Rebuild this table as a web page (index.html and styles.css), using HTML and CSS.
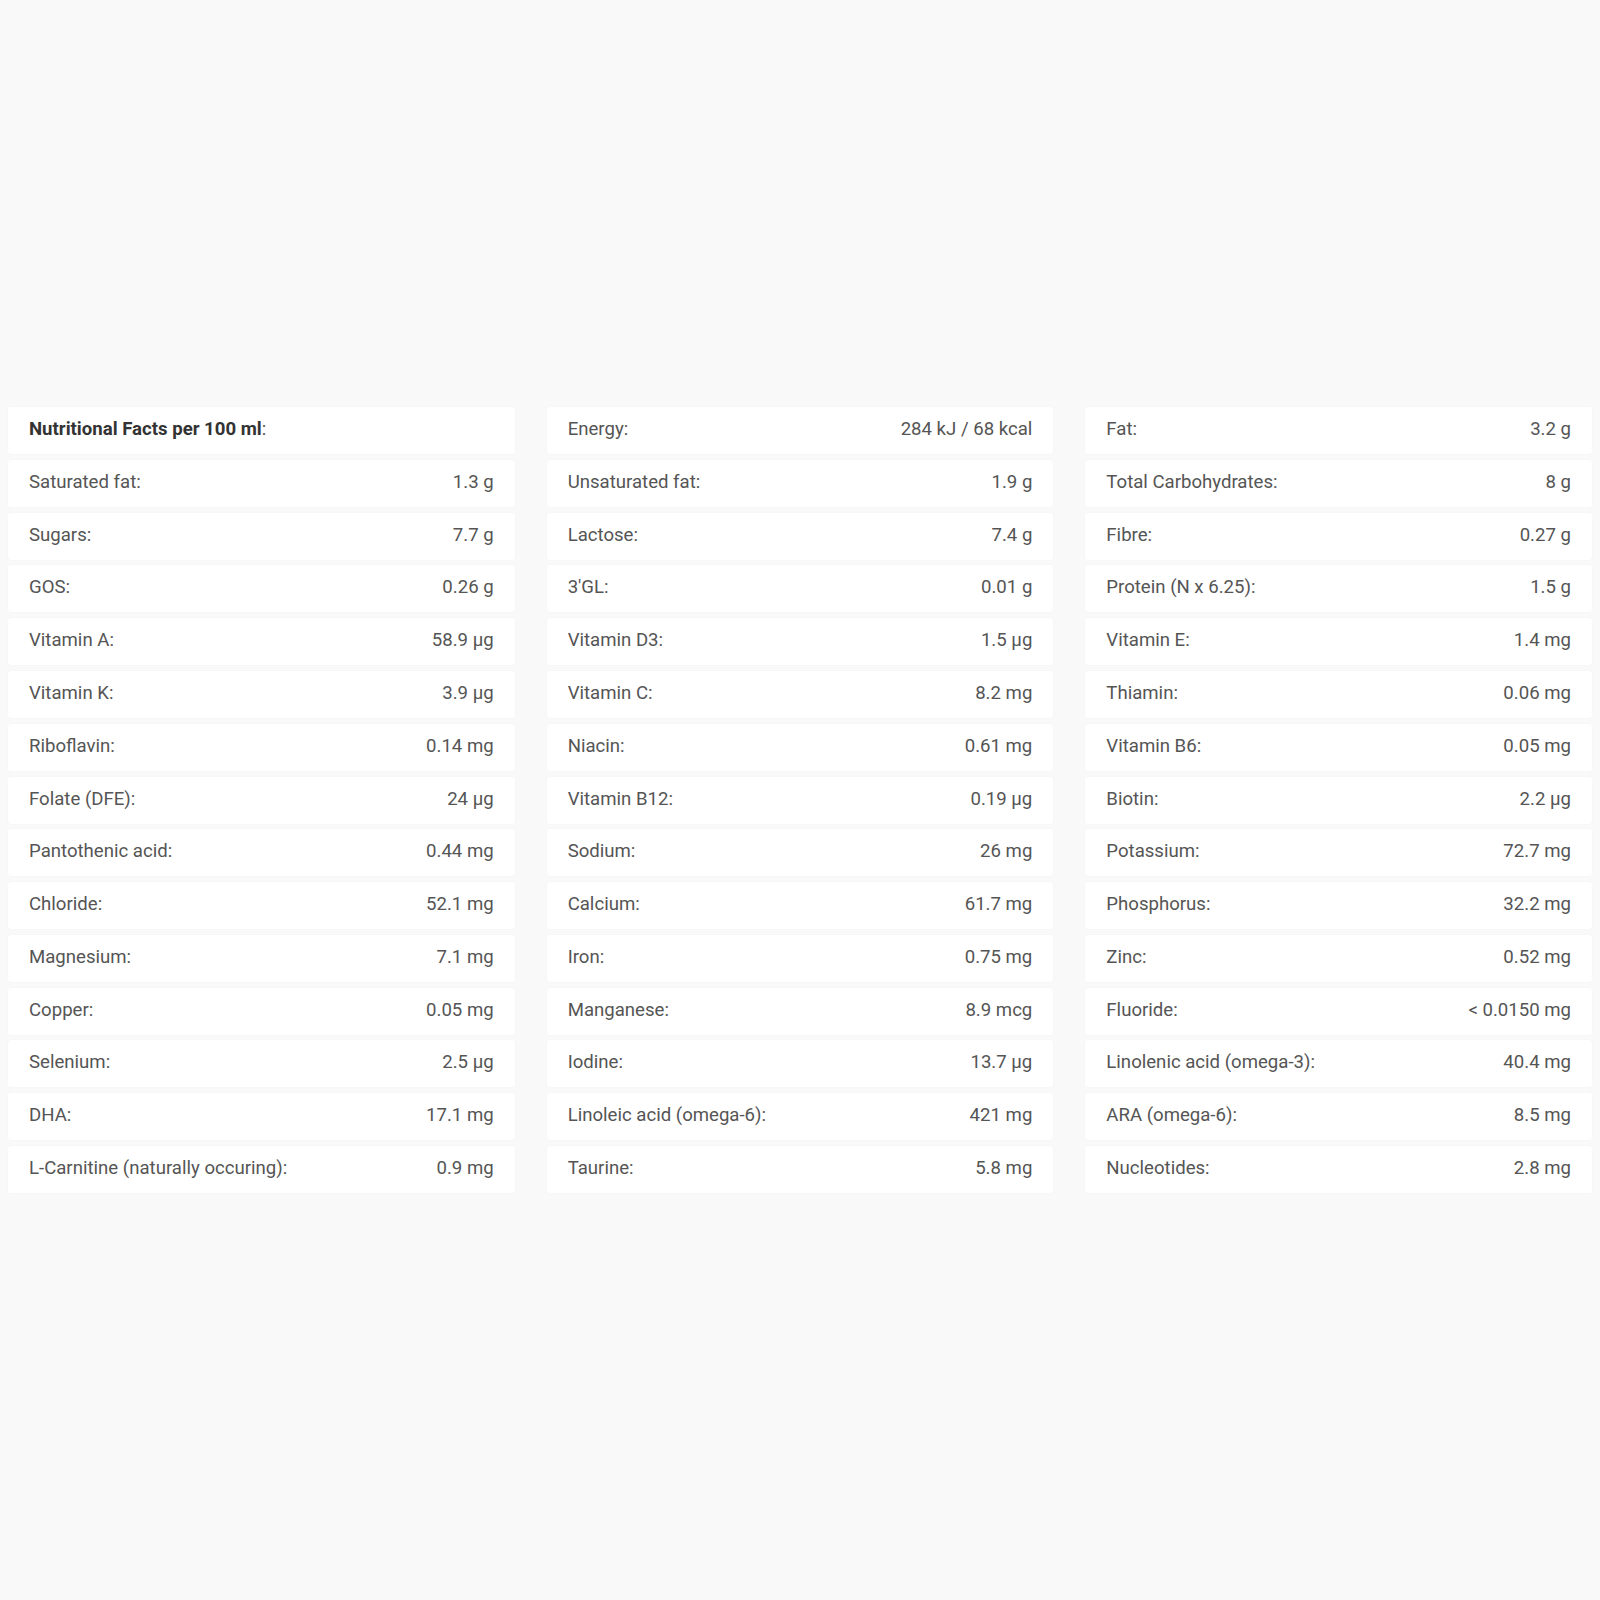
FILE: index.html
```html
<!DOCTYPE html>
<html lang="en">
<head>
<meta charset="utf-8">
<title>Nutritional Facts</title>
<link rel="stylesheet" href="styles.css">
</head>
<body>
<main class="page">
  <section class="facts">
    <div class="col">
      <div class="row"><span class="label"><b>Nutritional Facts per 100 ml</b>:</span><span class="value"></span></div>
      <div class="row"><span class="label">Saturated fat:</span><span class="value">1.3 g</span></div>
      <div class="row"><span class="label">Sugars:</span><span class="value">7.7 g</span></div>
      <div class="row"><span class="label">GOS:</span><span class="value">0.26 g</span></div>
      <div class="row"><span class="label">Vitamin A:</span><span class="value">58.9 µg</span></div>
      <div class="row"><span class="label">Vitamin K:</span><span class="value">3.9 µg</span></div>
      <div class="row"><span class="label">Riboflavin:</span><span class="value">0.14 mg</span></div>
      <div class="row"><span class="label">Folate (DFE):</span><span class="value">24 µg</span></div>
      <div class="row"><span class="label">Pantothenic acid:</span><span class="value">0.44 mg</span></div>
      <div class="row"><span class="label">Chloride:</span><span class="value">52.1 mg</span></div>
      <div class="row"><span class="label">Magnesium:</span><span class="value">7.1 mg</span></div>
      <div class="row"><span class="label">Copper:</span><span class="value">0.05 mg</span></div>
      <div class="row"><span class="label">Selenium:</span><span class="value">2.5 µg</span></div>
      <div class="row"><span class="label">DHA:</span><span class="value">17.1 mg</span></div>
      <div class="row"><span class="label">L-Carnitine (naturally occuring):</span><span class="value">0.9 mg</span></div>
    </div>
    <div class="col">
      <div class="row"><span class="label">Energy:</span><span class="value">284 kJ / 68 kcal</span></div>
      <div class="row"><span class="label">Unsaturated fat:</span><span class="value">1.9 g</span></div>
      <div class="row"><span class="label">Lactose:</span><span class="value">7.4 g</span></div>
      <div class="row"><span class="label">3'GL:</span><span class="value">0.01 g</span></div>
      <div class="row"><span class="label">Vitamin D3:</span><span class="value">1.5 µg</span></div>
      <div class="row"><span class="label">Vitamin C:</span><span class="value">8.2 mg</span></div>
      <div class="row"><span class="label">Niacin:</span><span class="value">0.61 mg</span></div>
      <div class="row"><span class="label">Vitamin B12:</span><span class="value">0.19 µg</span></div>
      <div class="row"><span class="label">Sodium:</span><span class="value">26 mg</span></div>
      <div class="row"><span class="label">Calcium:</span><span class="value">61.7 mg</span></div>
      <div class="row"><span class="label">Iron:</span><span class="value">0.75 mg</span></div>
      <div class="row"><span class="label">Manganese:</span><span class="value">8.9 mcg</span></div>
      <div class="row"><span class="label">Iodine:</span><span class="value">13.7 µg</span></div>
      <div class="row"><span class="label">Linoleic acid (omega-6):</span><span class="value">421 mg</span></div>
      <div class="row"><span class="label">Taurine:</span><span class="value">5.8 mg</span></div>
    </div>
    <div class="col">
      <div class="row"><span class="label">Fat:</span><span class="value">3.2 g</span></div>
      <div class="row"><span class="label">Total Carbohydrates:</span><span class="value">8 g</span></div>
      <div class="row"><span class="label">Fibre:</span><span class="value">0.27 g</span></div>
      <div class="row"><span class="label">Protein (N x 6.25):</span><span class="value">1.5 g</span></div>
      <div class="row"><span class="label">Vitamin E:</span><span class="value">1.4 mg</span></div>
      <div class="row"><span class="label">Thiamin:</span><span class="value">0.06 mg</span></div>
      <div class="row"><span class="label">Vitamin B6:</span><span class="value">0.05 mg</span></div>
      <div class="row"><span class="label">Biotin:</span><span class="value">2.2 µg</span></div>
      <div class="row"><span class="label">Potassium:</span><span class="value">72.7 mg</span></div>
      <div class="row"><span class="label">Phosphorus:</span><span class="value">32.2 mg</span></div>
      <div class="row"><span class="label">Zinc:</span><span class="value">0.52 mg</span></div>
      <div class="row"><span class="label">Fluoride:</span><span class="value">&lt; 0.0150 mg</span></div>
      <div class="row"><span class="label">Linolenic acid (omega-3):</span><span class="value">40.4 mg</span></div>
      <div class="row"><span class="label">ARA (omega-6):</span><span class="value">8.5 mg</span></div>
      <div class="row"><span class="label">Nucleotides:</span><span class="value">2.8 mg</span></div>
    </div>
  </section>
</main>
</body>
</html>
```

FILE: styles.css
```css
html, body {
  margin: 0;
  padding: 0;
  background: #f9f9f9;
}

body {
  font-family: Roboto, "Liberation Sans", Arial, sans-serif;
  color: #555555;
}

.page {
  min-height: 100vh;
  box-sizing: border-box;
  padding: 0 8px;
  display: flex;
  align-items: center;
}

.facts {
  width: 100%;
  display: grid;
  grid-template-columns: repeat(3, 1fr);
  column-gap: 32px;
}

.col {
  display: flex;
  flex-direction: column;
  gap: 5.8px;
}

.row {
  height: 47px;
  box-sizing: border-box;
  padding: 0 21px 3px 21px;
  background: #ffffff;
  border-radius: 3px;
  box-shadow: 0 0 2px rgba(0, 0, 0, 0.04);
  display: flex;
  align-items: center;
  justify-content: space-between;
  font-size: 18.6px;
  line-height: 22px;
}

.label b {
  font-weight: 700;
  color: #333333;
}
```
